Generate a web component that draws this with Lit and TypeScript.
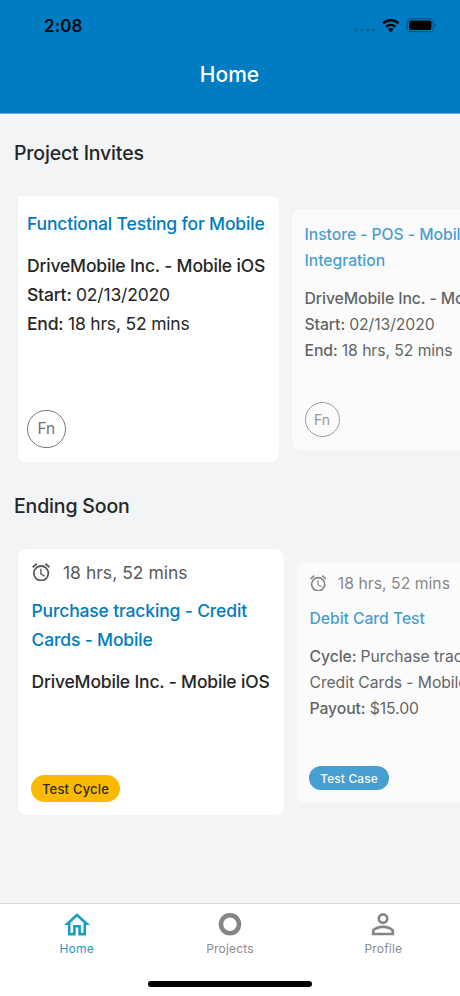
import { LitElement, html, css, svg } from "lit";
import { customElement, property } from "lit/decorators.js";

const alarmIcon = html`<svg viewBox="2 1.86 20 20.14" fill="currentColor">
  <path d="M12 20A7 7 0 0 1 5 13A7 7 0 0 1 12 6A7 7 0 0 1 19 13A7 7 0 0 1 12 20M12 4A9 9 0 0 0 3 13A9 9 0 0 0 12 22A9 9 0 0 0 21 13A9 9 0 0 0 12 4M12.5 8H11V14L15.75 16.85L16.5 15.62L12.5 13.25V8M7.88 3.39L6.6 1.86L2 5.71L3.29 7.24L7.88 3.39M22 5.72L17.4 1.86L16.11 3.39L20.71 7.25L22 5.72Z"></path>
</svg>`;

const icons = {
  home: svg`<path transform="translate(-2.6 -2.6) scale(1.3)" d="M12 5.69L17 10.19V18H15V12H9V18H7V10.19L12 5.69M12 3L2 12H5V20H11V14H13V20H19V12H22L12 3"/>`,
  projects: svg`<circle cx="13" cy="12.3" r="9" fill="none" stroke="currentColor" stroke-width="4.5"/>`,
  profile: svg`<path transform="translate(-3.68 -4.5) scale(1.39)" d="M12 13C14.67 13 20 14.33 20 17V20H4V17C4 14.33 9.33 13 12 13M12 4A4 4 0 0 1 16 8A4 4 0 0 1 12 12A4 4 0 0 1 8 8A4 4 0 0 1 12 4M12 14.9C9.03 14.9 5.9 16.36 5.9 17V18.1H18.1V17C18.1 16.36 14.97 14.9 12 14.9M12 5.9A2.1 2.1 0 0 0 9.9 8A2.1 2.1 0 0 0 12 10.1A2.1 2.1 0 0 0 14.1 8A2.1 2.1 0 0 0 12 5.9Z"/>`,
};

@customElement("status-bar")
export class StatusBar extends LitElement {
  static styles = css`
    :host { display: flex; justify-content: space-between; align-items: center; height: 50px; padding: 0 20px 0 44px; box-sizing: border-box; color: #05090d; }
    .time { font-size: 17px; font-weight: 600; letter-spacing: 0.1px; line-height: 20px; margin-top: 1px; }
    .signals { display: block; width: 86px; height: 16px; }
  `;
  render() {
    return html`<span class="time">2:08</span>
      <svg class="signals" viewBox="0 0 86 16">
        <g fill="#08639b">
          <circle cx="2.3" cy="13" r="1.7"></circle><circle cx="8" cy="13" r="1.7"></circle>
          <circle cx="13.6" cy="13" r="1.7"></circle><circle cx="19.3" cy="13" r="1.7"></circle>
        </g>
        <g fill="none" stroke="#020508" stroke-width="2.5">
          <path d="M28.9 6.3a11.6 11.6 0 0 1 15.6 0"></path>
          <path d="M32 9.8a7.1 7.1 0 0 1 9.4 0"></path>
        </g>
        <path fill="#020508" d="M36.7 15.2 33.8 12.2a4.3 4.3 0 0 1 5.8 0z"></path>
        <rect x="53.2" y="1.7" width="26" height="13" rx="3.8" fill="none" stroke="#07558a" stroke-width="1.2"></rect>
        <rect x="55" y="3.5" width="22.4" height="9.4" rx="2" fill="#000"></rect>
        <path fill="#07558a" d="M80.7 6v4.6c2-.9 2-3.7 0-4.6z"></path>
      </svg>`;
  }
}

@customElement("project-card")
export class ProjectCard extends LitElement {
  @property({ type: Boolean }) time = false;
  @property() heading = "";
  static styles = css`
    :host { display: flex; flex-direction: column; flex: none; box-sizing: border-box; background: #fff; color: #262626; line-height: 28.8px; font-size: 17.5px; font-weight: 450; letter-spacing: -0.0105em; }
    :host(.behind) { opacity: 0.7; font-size: 15.75px; line-height: 26px; letter-spacing: -0.005em; }
    .time { display: flex; align-items: center; color: #5a5a5a; font-weight: 400; letter-spacing: 0.001em; margin-bottom: 0.57em; }
    .time svg { width: 1.04em; height: 1.06em; margin: -0.08em 0.76em 0 0; }
    .title { color: #007bbd; margin-bottom: 0.77em; white-space: pre-line; letter-spacing: -0.009em; }
    :host(.behind) .time { margin-bottom: 0.62em; }
    :host(.behind) .title { letter-spacing: -0.004em; }
    .foot { margin-top: auto; display: flex; }
  `;
  render() {
    return html`${this.time ? html`<div class="time">${alarmIcon}<span>18 hrs, 52 mins</span></div>` : ""}
      <div class="title">${this.heading}</div>
      <slot></slot>
      <div class="foot"><slot name="foot"></slot></div>`;
  }
}

@customElement("app-root")
export class AppRoot extends LitElement {
  static styles = css`
    :host { display: flex; flex-direction: column; width: 460px; height: 996px; overflow: hidden; background: #f2f4f6; font-family: Inter, "Liberation Sans", sans-serif; }
    header { height: 114px; flex: none; background: #007cc3; border-bottom: 1px solid #6aaedb; box-sizing: border-box; }
    .page-title { color: #fff; font-size: 21px; font-weight: 450; line-height: 30px; text-align: center; padding: 10px 1px 0 0; }
    main { flex: 1; overflow: hidden; }
    h2 { margin: 0; padding-left: 14px; font-size: 19.5px; line-height: 30px; font-weight: 450; letter-spacing: -0.16px; color: #262626; }
    .invites-h { padding-top: 24px; }
    .ending-h { padding-top: 29px; }
    .row { display: flex; align-items: center; gap: 13px; padding-left: 18px; height: 266px; margin-top: 28px; }
    .row.soon { margin-top: 27.5px; }
    .invite { width: 261px; height: 266px; padding: 14px 9px 14px; border-radius: 3px 9px 9px 7px; }
    .invite.behind { width: 240px; height: 241px; padding: 13px 12px 12.5px 12.5px; border-radius: 8px; }
    .ending { width: 266px; height: 266px; padding: 10px 13.5px 13px; border-radius: 9px; }
    .ending.behind { width: 240px; height: 240px; padding: 9px 12px 12px 12.5px; border-radius: 8px; }
    .line { white-space: nowrap; }
    .thin { font-weight: 400; }
    .avatar { width: 38.5px; height: 38.5px; border: 1.2px solid #777; border-radius: 50%; box-sizing: border-box; display: grid; place-items: center; padding-top: 1px; font-size: 15.5px; font-weight: 400; color: #707070; }
    .behind .avatar { width: 35px; height: 35px; padding-top: 0; font-size: 14px; }
    .pill { display: grid; place-items: center; width: 89px; height: 27px; margin-left: -0.5px; border-radius: 14px; background: #fbb900; color: #302b20; font-size: 13px; font-weight: 450; letter-spacing: 0.2px; }
    .pill.case { width: 80px; height: 24px; margin-left: -0.5px; background: #007bc1; color: #fff; font-size: 11.8px; }
    nav { flex: none; height: 93px; box-sizing: border-box; border-top: 1px solid #d5d7d9; background: #fff; display: flex; flex-direction: column; align-items: center; justify-content: space-between; padding-bottom: 9.5px; }
    .tabs { display: grid; grid-template-columns: repeat(3, 1fr); width: 460px; padding-top: 8px; }
    .tab { display: flex; flex-direction: column; align-items: center; color: #8b8b8b; font-size: 12px; line-height: 16px; gap: 5px; letter-spacing: 0.2px; }
    .tab svg { width: 26px; height: 24px; fill: currentColor; color: #858585; }
    .tab.active, .tab.active svg { color: #159fc1; }
    .indicator { width: 164px; height: 5.5px; border-radius: 3px; background: #000; }
  `;
  tab(name: string, icon: unknown, active = false) {
    return html`<div class="tab ${active ? "active" : ""}"><svg viewBox="0 0 26 24">${icon}</svg><span>${name}</span></div>`;
  }
  invite(title: string, behind: boolean) {
    return html`<project-card class="invite ${behind ? "behind" : ""}" .heading=${title}>
      <div class="line">DriveMobile Inc. - Mobile iOS</div>
      <div class="line">Start: <span class="thin">02/13/2020</span></div>
      <div class="line">End: <span class="thin">18 hrs, 52 mins</span></div>
      <div class="avatar" slot="foot">Fn</div>
    </project-card>`;
  }
  render() {
    return html`
      <header><status-bar></status-bar><div class="page-title">Home</div></header>
      <main>
        <h2 class="invites-h">Project Invites</h2>
        <div class="row">
          ${this.invite("Functional Testing for Mobile", false)}
          ${this.invite("Instore - POS - Mobile\nIntegration", true)}
        </div>
        <h2 class="ending-h">Ending Soon</h2>
        <div class="row soon">
          <project-card class="ending" time .heading=${"Purchase tracking - Credit\nCards - Mobile"}>
            <div class="line">DriveMobile Inc. - Mobile iOS</div>
            <div class="pill" slot="foot">Test Cycle</div>
          </project-card>
          <project-card class="ending behind" time .heading=${"Debit Card Test"}>
            <div class="line">Cycle: <span class="thin">Purchase tracking -</span></div>
            <div class="line thin">Credit Cards - Mobile</div>
            <div class="line">Payout: <span class="thin">$15.00</span></div>
            <div class="pill case" slot="foot">Test Case</div>
          </project-card>
        </div>
      </main>
      <nav>
        <div class="tabs">
          ${this.tab("Home", icons.home, true)}${this.tab("Projects", icons.projects)}${this.tab("Profile", icons.profile)}
        </div>
        <div class="indicator"></div>
      </nav>`;
  }
}
